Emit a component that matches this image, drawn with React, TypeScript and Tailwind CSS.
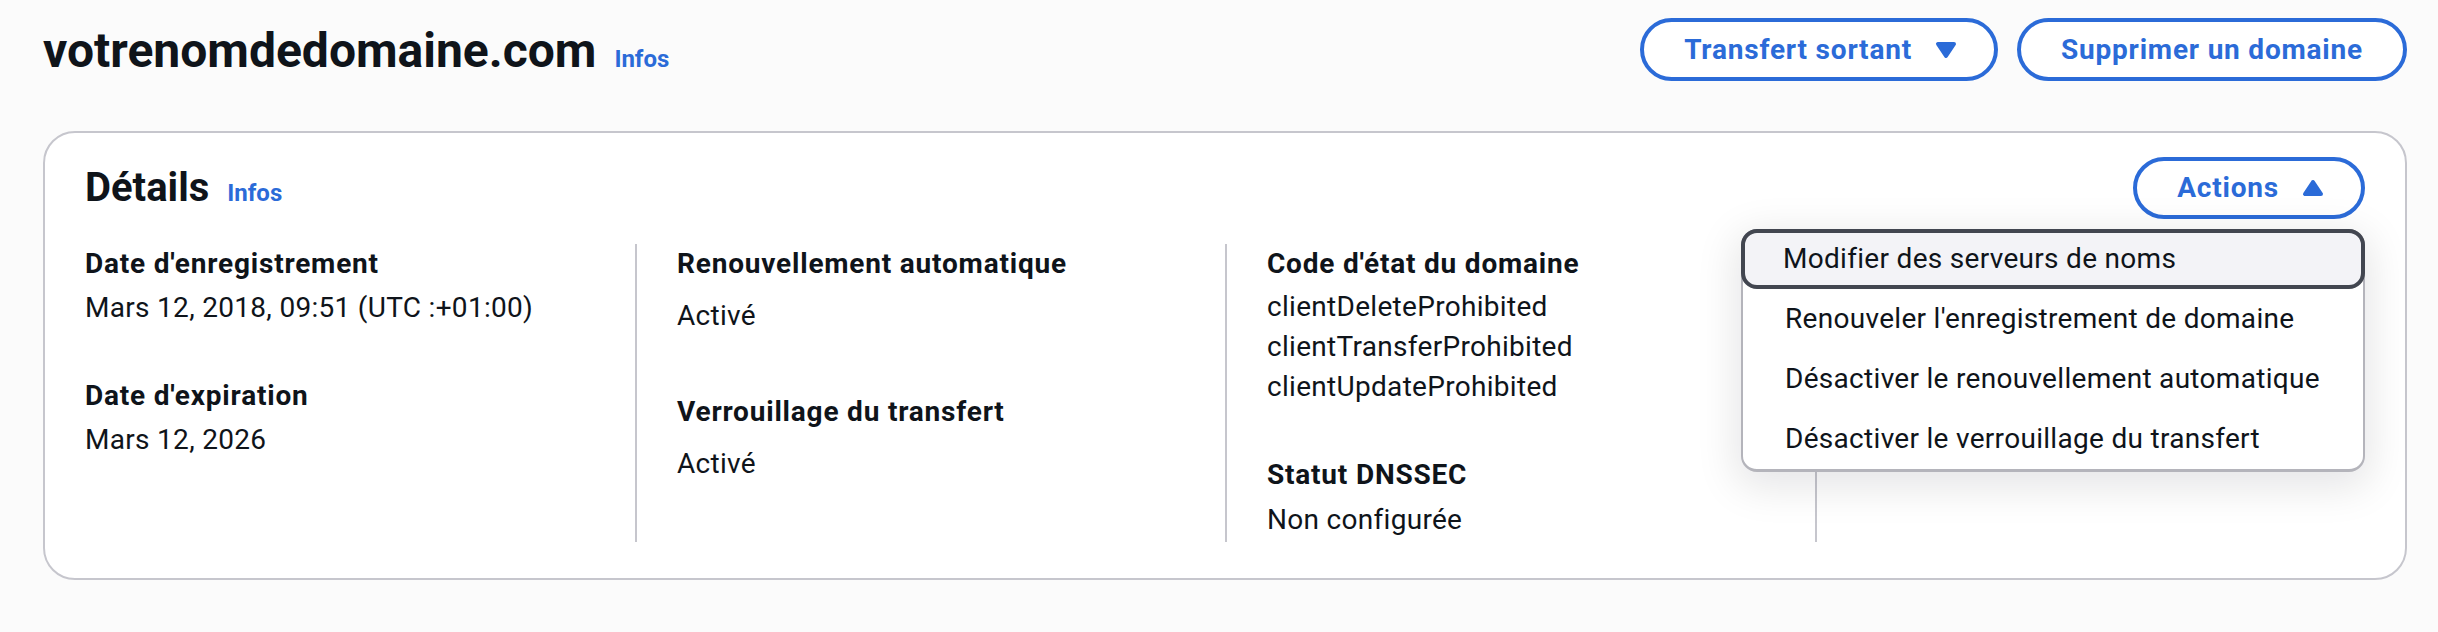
import type { ReactNode } from 'react';

const TEXTE = 'text-[#0f141a]';

function Caret({ up = false }: { up?: boolean }) {
    return (
        <svg width="32" height="32" viewBox="0 0 16 16" className="shrink-0">
            <path
                d={up ? 'M4 11h8l-4-6-4 6z' : 'M4 5h8l-4 6-4-6z'}
                fill="currentColor"
                stroke="currentColor"
                strokeWidth="2"
                strokeLinejoin="round"
            />
        </svg>
    );
}

function Bouton({ children, caret, up, h = 'h-[63px]' }: { children: ReactNode; caret?: boolean; up?: boolean; h?: string }) {
    return (
        <button
            className={`${h} flex items-center gap-[18px] rounded-full border-[4px] border-[#2b6bd8] bg-white pl-[40px] ${caret ? 'pr-[32px]' : 'pr-[40px]'} text-[28px] font-bold leading-none tracking-[0.8px] text-[#2b6bd8]`}
        >
            <span>{children}</span>
            {caret && <Caret up={up} />}
        </button>
    );
}

function Infos() {
    return <a className="ml-[18px] text-[24px] font-bold text-[#2b6bd8]">Infos</a>;
}

const ACTIONS = [
    'Modifier des serveurs de noms',
    "Renouveler l'enregistrement de domaine",
    'Désactiver le renouvellement automatique',
    'Désactiver le verrouillage du transfert',
];

export default function App() {
    return (
        <div className={`w-full h-[632px] bg-[#fbfbfb] pl-[43px] pr-[31px] pt-[18px] font-['Roboto','Open_Sans',sans-serif] ${TEXTE}`}>
            {/* en-tête de page */}
            <div className="flex items-start justify-between">
                <div className="mt-[3px] flex items-baseline">
                    <h1 className="text-[48px] font-bold leading-[60px]">votrenomdedomaine.com</h1>
                    <Infos />
                </div>
                <div className="flex gap-[19px]">
                    <Bouton caret>Transfert sortant</Bouton>
                    <Bouton>Supprimer un domaine</Bouton>
                </div>
            </div>

            {/* conteneur Détails */}
            <div className="mt-[50px] rounded-[32px] border-2 border-[#c6c6cd] bg-white px-[40px] pt-[24px] pb-[36px]">
                <div className="flex items-center justify-between">
                    <div className="flex items-baseline">
                        <h2 className="text-[40px] font-bold leading-[48px]">Détails</h2>
                        <Infos />
                    </div>
                    <div className="relative">
                        <Bouton caret up h="h-[62px]">Actions</Bouton>
                        <div className="absolute right-0 top-full z-10 mt-[10px] w-[624px] rounded-[16px] border-2 border-b-[3px] border-[#b4b4bb] bg-white text-[28px] tracking-[0.3px] shadow-[0_10px_40px_6px_rgba(0,7,22,0.10)]">
                            {ACTIONS.map((a, i) => (
                                <div
                                    key={a}
                                    className={`flex h-[60px] items-center rounded-[16px] border-[4px] pl-[38px] ${
                                        i === 0 ? '-mx-[2px] -mt-[2px] border-[#424650] bg-[#f3f3f7]' : 'border-transparent'
                                    }`}
                                >
                                    {a}
                                </div>
                            ))}
                        </div>
                    </div>
                </div>

                <div className="-mx-[40px] mt-[25px] grid grid-cols-4 text-[28px] tracking-[0.3px]">
                    <div className="px-[40px]">
                        <div className="font-bold leading-[40px] tracking-[0.8px]">Date d'enregistrement</div>
                        <div className="mt-[2px] leading-[44px]">Mars 12, 2018, 09:51 (UTC :+01:00)</div>
                        <div className="mt-[46px] font-bold leading-[40px] tracking-[0.8px]">Date d'expiration</div>
                        <div className="mt-[2px] leading-[44px]">Mars 12, 2026</div>
                    </div>
                    <div className="border-l-2 border-[#c6c6cd] px-[40px]">
                        <div className="font-bold leading-[40px] tracking-[0.8px]">Renouvellement automatique</div>
                        <div className="mt-[10px] leading-[44px]">Activé</div>
                        <div className="mt-[54px] font-bold leading-[40px] tracking-[0.8px]">Verrouillage du transfert</div>
                        <div className="mt-[10px] leading-[44px]">Activé</div>
                    </div>
                    <div className="border-l-2 border-[#c6c6cd] px-[40px]">
                        <div className="font-bold leading-[40px] tracking-[0.8px]">Code d'état du domaine</div>
                        <div className="mt-[3px] leading-[40px]">
                            <div>clientDeleteProhibited</div>
                            <div>clientTransferProhibited</div>
                            <div>clientUpdateProhibited</div>
                        </div>
                        <div className="mt-[48px] font-bold leading-[40px] tracking-[0.8px]">Statut DNSSEC</div>
                        <div className="mt-[3px] leading-[44px]">Non configurée</div>
                    </div>
                    <div className="border-l-2 border-[#c6c6cd] px-[40px]" />
                </div>
            </div>
        </div>
    );
}
